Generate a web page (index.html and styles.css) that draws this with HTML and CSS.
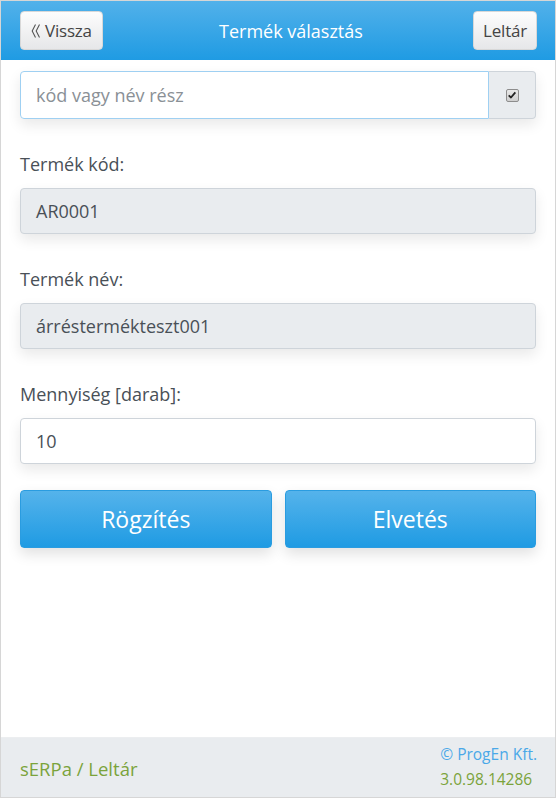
FILE: index.html
```html
<!DOCTYPE html>
<html lang="hu">
<head>
<meta charset="utf-8">
<title>Termék választás</title>
<link rel="stylesheet" href="styles.css">
</head>
<body>
<div class="frame">
  <header class="topbar">
    <button class="hbtn back"><svg class="chev" viewBox="0 0 10 16" width="10" height="16"><path d="M4.5 1.5 L1.2 8 L4.5 14.5 M8.5 1.5 L5.2 8 L8.5 14.5" fill="none" stroke="#555" stroke-width="1.1"/></svg>Vissza</button>
    <div class="title">Termék választás</div>
    <button class="hbtn">Leltár</button>
  </header>
  <main class="content">
    <div class="search">
      <input class="search-input" type="text" placeholder="kód vagy név rész">
      <div class="addon"><span class="cb"><svg viewBox="0 0 12 12" width="10" height="10"><path d="M2 6.5 L4.8 9 L10 2.8" fill="none" stroke="#222" stroke-width="2.2" stroke-linejoin="round"/></svg></span></div>
    </div>
    <div class="field">
      <label class="lbl">Termék kód:</label>
      <div class="box ro">AR0001</div>
    </div>
    <div class="field">
      <label class="lbl">Termék név:</label>
      <div class="box ro">árréstermékteszt001</div>
    </div>
    <div class="field">
      <label class="lbl">Mennyiség [darab]:</label>
      <div class="box">10</div>
    </div>
    <div class="actions">
      <button class="bigbtn">Rögzítés</button>
      <button class="bigbtn">Elvetés</button>
    </div>
  </main>
  <footer class="foot">
    <div class="app">sERPa / Leltár</div>
    <div class="meta">
      <div class="copy">© ProgEn Kft.</div>
      <div class="ver">3.0.98.14286</div>
    </div>
  </footer>
</div>
</body>
</html>
```
FILE: styles.css
```css
* { box-sizing: border-box; }
html, body { margin: 0; padding: 0; }
body {
  font-family: "Open Sans", "Noto Sans", sans-serif;
  color: #495057;
  background: #fff;
}
.frame {
  width: 556px;
  height: 798px;
  border: 1px solid #d6d6d6;
  display: flex;
  flex-direction: column;
}
.topbar {
  height: 59px;
  background: linear-gradient(#52b1ea, #1f9be3);
  display: flex;
  align-items: center;
  justify-content: space-between;
  padding: 0 18px 0 19px;
}
.title {
  color: #fff;
  font-size: 18px;
  margin-left: 6px;
}
.hbtn {
  height: 39px;
  padding: 0 9px;
  font-family: inherit;
  font-size: 17px;
  color: #444;
  background: linear-gradient(#fdfdfd, #e6e7e9);
  border: 1px solid #d8d8d8;
  border-radius: 4px;
  letter-spacing: -0.2px;
  display: flex;
  align-items: center;
}
.back { padding: 0 10px 0 10px; }
.chev { margin-right: 4px; margin-top: 1px; }
.content {
  flex: 1;
  padding: 11px 19px 0 19px;
}
.search {
  display: flex;
  height: 48px;
  box-shadow: 0 6px 14px rgba(0,0,0,0.09);
  border-radius: 4px;
}
.search-input {
  flex: 1;
  border: 1px solid #9fd0f2;
  border-radius: 4px 0 0 4px;
  padding: 0 15px;
  font-family: inherit;
  font-size: 18px;
  color: #495057;
  outline: none;
}
.search-input::placeholder { color: #8a9096; }
.addon {
  width: 47px;
  background: #e9ecef;
  border: 1px solid #ced4da;
  border-left: none;
  border-radius: 0 4px 4px 0;
  display: flex;
  align-items: center;
  justify-content: center;
}
.cb {
  width: 13px;
  height: 13px;
  border: 1px solid #8d8d8d;
  border-radius: 2px;
  background: linear-gradient(#e8e8e8, #cfcfcf);
  display: flex;
  align-items: center;
  justify-content: center;
}
.field { margin-top: 33px; }
.lbl {
  display: block;
  font-size: 18px;
  margin-bottom: 12px;
  line-height: 24px;
}
.box {
  height: 46px;
  border: 1px solid #ced4da;
  border-radius: 4px;
  padding: 0 15px;
  display: flex;
  align-items: center;
  font-size: 18px;
  background: #fff;
  box-shadow: 0 6px 14px rgba(0,0,0,0.09);
}
.box.ro { background: #e9ecef; }
.actions {
  display: grid;
  grid-template-columns: 1fr 1fr;
  gap: 13px;
  margin-top: 26px;
}
.bigbtn {
  height: 58px;
  border: 1px solid #2a9ce0;
  border-radius: 4px;
  background: linear-gradient(#55b3eb, #1f9be3);
  color: #fff;
  font-family: inherit;
  font-size: 23px;
  box-shadow: 0 6px 14px rgba(0,0,0,0.12);
}
.foot {
  height: 60px;
  background: #e9ecef;
  border-top: 1px solid #eceef0;
  display: flex;
  align-items: center;
  justify-content: space-between;
  padding: 0 18px 0 19px;
}
.app {
  color: #7ba33b;
  font-size: 18.5px;
  margin-top: 2px;
}
.meta {
  text-align: left;
  font-size: 15.5px;
  line-height: 25px;
  margin-top: -2px;
}
.copy { color: #4aa8e8; }
.ver { color: #7ba33b; }
```
